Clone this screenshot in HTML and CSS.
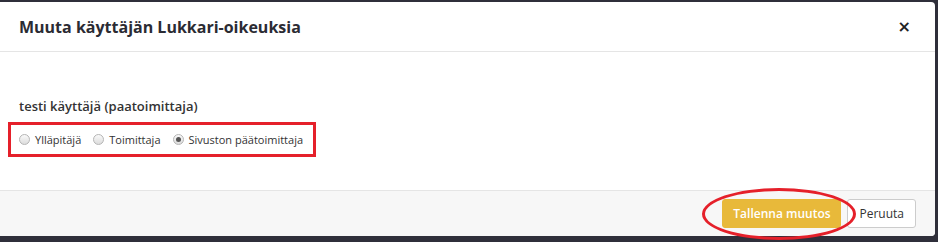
FILE: index.html
```html
<!DOCTYPE html>
<html>
<head>
<meta charset="utf-8">
<link rel="stylesheet" href="styles.css">
</head>
<body>
<div class="modal">
  <div class="modal-header">
    <h4 class="title">Muuta käyttäjän Lukkari-oikeuksia</h4>
    <button class="close" type="button">×</button>
  </div>
  <div class="modal-body">
    <div class="user">testi käyttäjä (paatoimittaja)</div>
    <div class="radios">
      <label class="radio"><span class="dot"></span>Ylläpitäjä</label>
      <label class="radio"><span class="dot"></span>Toimittaja</label>
      <label class="radio"><span class="dot checked"></span>Sivuston päätoimittaja</label>
    </div>
  </div>
  <div class="modal-footer">
    <button class="btn btn-save" type="button">Tallenna muutos</button>
    <button class="btn btn-cancel" type="button">Peruuta</button>
  </div>
</div>
<div class="ellipse"></div>
</body>
</html>
```
FILE: styles.css
```css
html, body {
  margin: 0;
  padding: 0;
}
body {
  background: #2f2f3a;
  width: 938px;
  height: 242px;
  overflow: hidden;
  position: relative;
  font-family: "Open Sans", sans-serif;
  color: #333;
}
.modal {
  margin-top: 2px;
  width: 935px;
  height: 234px;
  background: #fff;
  border-radius: 0 4px 4px 0;
  display: flex;
  flex-direction: column;
}
.modal-header {
  height: 49px;
  border-bottom: 1px solid #e5e5e5;
  display: flex;
  align-items: center;
  justify-content: space-between;
  padding: 0 24px 0 19px;
}
.title {
  margin: 0;
  font-size: 16px;
  font-weight: 700;
  color: #2b2b33;
}
.close {
  border: 0;
  background: none;
  padding: 0;
  font-family: "DejaVu Sans", sans-serif;
  font-size: 16px;
  font-weight: 700;
  color: #222;
  line-height: 1;
}
.modal-body {
  flex: 1;
  padding: 45px 0 0 19px;
}
.user {
  font-size: 13px;
  line-height: 18px;
  font-weight: 600;
  color: #333;
}
.radios {
  box-sizing: border-box;
  margin: 7px 0 0 -11px;
  width: 308px;
  height: 35px;
  border: 3px solid #e5202a;
  display: flex;
  align-items: center;
  padding-left: 8px;
  gap: 12px;
}
.radio {
  display: flex;
  align-items: center;
  font-size: 11px;
  color: #333;
}
.dot {
  width: 9px;
  height: 9px;
  border-radius: 50%;
  border: 1px solid #b5b5b5;
  background: linear-gradient(#fafafa, #dcdcdc);
  margin-right: 5px;
  position: relative;
}
.dot.checked::after {
  content: "";
  position: absolute;
  left: 2px;
  top: 2px;
  width: 5px;
  height: 5px;
  border-radius: 50%;
  background: #555;
}
.modal-footer {
  height: 45px;
  border-top: 1px solid #e5e5e5;
  background: #f7f7f7;
  border-radius: 0 0 4px 0;
  display: flex;
  align-items: center;
  justify-content: flex-end;
  padding-right: 19px;
  gap: 6px;
}
.btn {
  font-family: "Open Sans", sans-serif;
  font-size: 12px;
  height: 29px;
  border-radius: 3px;
  padding: 0 11px;
  white-space: nowrap;
}
.btn-save {
  box-sizing: border-box;
  width: 119px;
  background: #e8b93a;
  border: 1px solid #e8b93a;
  color: #fff;
  font-weight: 600;
  padding: 0;
}
.btn-cancel {
  background: #fff;
  border: 1px solid #ccc;
  color: #333;
}
.ellipse {
  position: absolute;
  left: 702px;
  top: 188px;
  width: 148px;
  height: 46px;
  border: 3px solid #e5202a;
  border-radius: 50%;
}
```
